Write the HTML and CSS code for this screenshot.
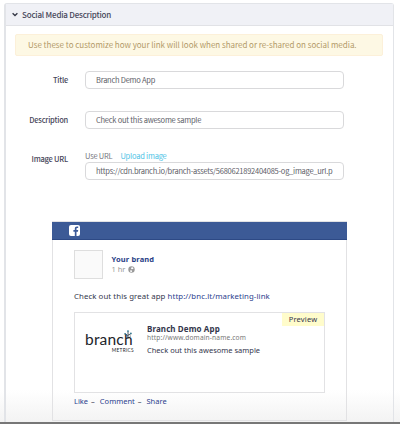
FILE: index.html
```html
<!DOCTYPE html>
<html lang="en">
<head>
<meta charset="utf-8">
<title>Social Media Description</title>
<link rel="stylesheet" href="styles.css">
</head>
<body>
<main class="panel">
  <header class="panel-head">
    <svg class="chevron" viewBox="0 0 6 5"><path d="M.6 1.2 3 3.5 5.4 1.2"/></svg>
    <h1>Social Media Description</h1>
  </header>
  <p class="alert">Use these to customize how your link will look when shared or re-shared on social media.</p>
  <form class="form">
    <div class="row">
      <label>Title</label>
      <div class="field"><div class="input">Branch Demo App</div></div>
    </div>
    <div class="row">
      <label>Description</label>
      <div class="field"><div class="input">Check out this awesome sample</div></div>
    </div>
    <div class="row row-url">
      <label>Image URL</label>
      <div class="field">
        <div class="modes"><span>Use URL</span><a>Upload image</a></div>
        <div class="input">https://cdn.branch.io/branch-assets/5680621892404085-og_image_url.p</div>
      </div>
    </div>
  </form>
  <section class="post">
    <div class="post-bar">
      <svg class="fb" viewBox="0 0 11 11"><rect width="11" height="11" rx="2" fill="#fff"/><path d="M5.8 11V6.7H4.4V5h1.4V3.8C5.8 2.3 6.6 1.6 8 1.6h1.2v1.5h-.8c-.7 0-.9.3-.9.9v1h1.7L9 6.7H7.5V11z" fill="#3b5998"/></svg>
    </div>
    <div class="post-body">
      <div class="author">
        <div class="avatar"></div>
        <div class="author-text">
          <strong>Your brand</strong>
          <div class="time"><span>1 hr</span><svg class="globe" viewBox="0 0 7 7"><circle cx="3.5" cy="3.5" r="3.2" fill="#999"/><path d="M3.9 1.1 5.6 1.9 5 3.1 3.6 3.3 3 2.4zM2.2 4.3l1.9.3-.3 1.5-1.4-.2z" fill="#fff"/></svg></div>
        </div>
      </div>
      <p class="message">Check out this great app <a>http://bnc.lt/marketing-link</a></p>
      <div class="card">
        <div class="logo">
          <svg class="sprig" viewBox="0 0 8 9"><path d="M4 9V1.5M4 6.2 1.3 4M4 5.2 6.8 3.8" fill="none" stroke="#28363f" stroke-width=".8"/><g fill="#34788f"><circle cx="4" cy="1.1" r=".9"/><circle cx="1.1" cy="3.8" r=".9"/><circle cx="6.9" cy="3.4" r=".9"/></g><circle cx="6.2" cy="6" r=".6" fill="#28363f"/></svg>
          <div class="logo-name">branch</div>
          <div class="logo-sub">METRICS</div>
        </div>
        <div class="card-text">
          <strong>Branch Demo App</strong>
          <div class="domain">http://www.domain-name.com</div>
          <div class="summary">Check out this awesome sample</div>
        </div>
        <span class="tag">Preview</span>
      </div>
      <div class="actions"><a>Like</a><i>–</i><a>Comment</a><i>–</i><a>Share</a></div>
    </div>
  </section>
</main>
</body>
</html>
```
FILE: styles.css
```css
* { box-sizing: border-box; }
html, body { margin: 0; height: 424px; overflow: hidden; }
body {
  padding: 3px 6px 0 4px;
  background: linear-gradient(#fff 390px, #f3f3f3 422px);
  border-bottom: 2px solid #777;
  font-family: "Noto Sans CJK SC", sans-serif;
  color: #464659;
  white-space: nowrap;
}
h1, p { margin: 0; font-weight: inherit; }
svg { display: block; }
.panel { height: 430px; border: 1px solid #e2e4e8; border-width: 1px 1px 0 2px; border-radius: 3px 3px 0 0; }
.panel-head { display: flex; align-items: center; height: 22px; padding-left: 6px; background: #f0f1f6; border-bottom: 1px solid #e1e2e6; }
.chevron { width: 6px; height: 5px; margin-right: 4px; }
.chevron path { fill: none; stroke: #333744; stroke-width: 1.3; }
h1 { font-size: 8px; line-height: 14px; font-weight: 500; letter-spacing: -.2px; }
.alert { height: 22px; margin: 8px 10px 0 9px; padding-left: 12px; line-height: 19px; font-size: 8px; letter-spacing: -.02px; color: #b39a68; background: #fdf8e4; border: 1px solid #fcf0d9; border-radius: 2px; }
.form { padding-top: 15px; }
.row { display: flex; height: 18px; margin-bottom: 22px; font-size: 7.5px; letter-spacing: -.22px; }
.row label { width: 62px; margin-right: 17px; text-align: right; line-height: 18px; font-weight: 500; }
.field { width: 259px; }
.input { height: 18px; padding-left: 10px; line-height: 15px; letter-spacing: -.245px; border: 1px solid #d9d9db; border-radius: 4px; color: #606068; background: #fff; }
.row-url { height: 29px; margin: 0; }
.row-url label { line-height: 16px; }
.modes { display: flex; gap: 8px; height: 11px; line-height: 9px; color: #777780; }
.modes a { color: #4fc3e6; }
.post { width: 295px; height: 200px; margin: 41px 0 0 46px; border: 1px solid #e2e2e4; font-family: "Noto Sans", sans-serif; font-size: 7.5px; color: #34364c; }
.post-bar { height: 18px; margin: 0 -1px 0 -1px; padding: 3px 0 0 17px; background: #3c5a96; border-bottom: 1px solid #2d4985; }
.fb { width: 11px; height: 11px; }
.post-body { padding: 10px 0 0 21px; }
.author { display: flex; height: 29px; gap: 8.5px; }
.avatar { width: 29px; height: 29px; background: #fafafa; border: 1px solid #dedede; }
.author strong { display: block; margin-top: 4px; line-height: 10px; letter-spacing: .15px; color: #273d85; }
.time { display: flex; align-items: center; gap: 3px; height: 10px; color: #999; }
.globe { width: 7px; height: 7px; }
.message { margin-top: 11px; line-height: 12px; font-size: 7.8px; letter-spacing: .09px; }
a { color: #2c418e; }
.card { position: relative; display: flex; width: 251px; height: 81px; margin-top: 10px; border: 1px solid #e2e2e4; background: #fff; }
.logo { position: relative; width: 72px; padding: 18px 0 0 10px; font-family: Lato, sans-serif; color: #22242a; }
.logo-name { height: 17px; font-size: 15.5px; line-height: 17px; letter-spacing: .2px; }
.logo-sub { width: 49px; text-align: right; font-size: 4.8px; line-height: 5px; letter-spacing: .3px; }
.sprig { position: absolute; left: 49px; top: 17px; width: 8px; height: 9px; }
.card-text { padding-top: 11px; }
.card-text strong { display: block; line-height: 10px; font-size: 8px; letter-spacing: .1px; }
.domain { font-size: 6.6px; line-height: 7px; letter-spacing: .15px; color: #777; }
.summary { margin-top: 3px; line-height: 12px; }
.tag { position: absolute; right: 0; top: 0; width: 42px; height: 13px; line-height: 13px; text-align: center; letter-spacing: .2px; background: #fffccb; }
.actions { display: flex; line-height: 10px; margin-top: 3px; }
.actions i { font-style: normal; margin: 0 5px 0 3px; }
```
